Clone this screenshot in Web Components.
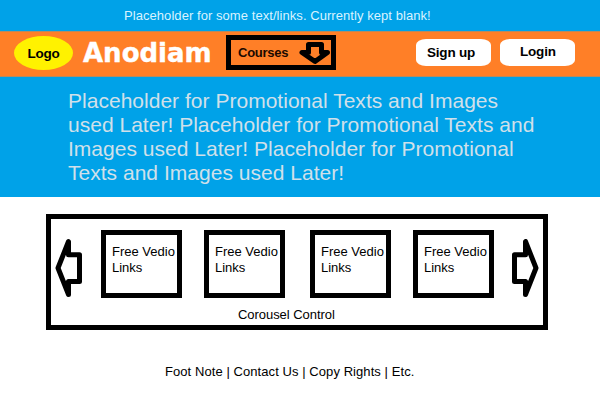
<!DOCTYPE html>
<html lang="en">
<head>
<meta charset="utf-8">
<title>Anodiam</title>
<style>
body { margin: 0; background: #fff; color: #000; font: 13px/15px "Liberation Sans", Arial, sans-serif; }
</style>
</head>
<body>
<anodiam-page></anodiam-page>
<script>
const define = (name, html) => customElements.define(name, class extends HTMLElement {
  constructor() {
    super();
    const t = document.createElement('template');
    t.innerHTML = html;
    this.attachShadow({ mode: 'open' }).append(t.content.cloneNode(true));
  }
});

define('top-strip', `<style>
:host { display: block; box-sizing: border-box; height: 31px; padding: 8px 0 0 124px; background: #00a2e8; color: #d9f3ff; letter-spacing: .06px; white-space: nowrap; }
</style><slot></slot>`);

define('site-logo', `<style>
:host { display: block; box-sizing: border-box; width: 59px; height: 34px; padding-top: 10px; border-radius: 50%; background: #fff200; text-align: center; font-weight: bold; font-size: 13.5px; letter-spacing: -.3px; }
</style><slot></slot>`);

define('site-brand', `<style>
:host { display: block; font: bold 26px/32px "DejaVu Sans", "Liberation Sans", sans-serif; color: #fff; -webkit-text-stroke: .4px #fff; }
</style><slot></slot>`);

define('course-menu', `<style>
:host { display: flex; box-sizing: border-box; width: 110px; height: 35px; border: 5px solid #000; padding-left: 7px; font-weight: bold; color: #1c0a00; }
span { padding-top: 5px; width: 62px; letter-spacing: -.25px; }
svg { display: block; margin-top: 1px; overflow: visible; }
</style><span><slot></slot></span>
<svg width="32" height="24" viewBox="0 0 32 24"><path d="M9.5 3.5H22.5V11.5H28.5L16 20.5L3 11.5H9.5Z" fill="#ff7f27" stroke="#000" stroke-width="5" stroke-linejoin="round"/></svg>`);

define('pill-button', `<style>
:host { display: block; box-sizing: border-box; width: 75px; height: 27px; padding: var(--pad, 6px 0 0 11px); border-radius: 10px / 6px; background: #fff; font-weight: bold; font-size: 13.5px; letter-spacing: -.2px; }
</style><slot></slot>`);

define('site-header', `<style>
:host { display: flex; align-items: flex-start; box-sizing: border-box; height: 46px; background: #ff7f27; border-top: 1px solid #b98a5e; border-bottom: 1px solid #b98a5e; }
site-logo { margin: 4px 0 0 14px; }
site-brand { margin: 5px 0 0 10px; width: 143px; }
course-menu { margin-top: 3px; }
pill-button { margin: 7px 0 0 80px; }
pill-button + pill-button { margin-left: 9px; --pad: 5px 0 0 20px; }
</style>
<site-logo>Logo</site-logo><site-brand>Anodiam</site-brand><course-menu>Courses</course-menu>
<pill-button>Sign up</pill-button><pill-button>Login</pill-button>`);

define('promo-banner', `<style>
:host { display: block; box-sizing: border-box; height: 120px; padding: 12px 0 0 68px; background: #00a2e8; color: #d0e0ea; font-size: 21px; line-height: 24px; letter-spacing: .02px; }
p { margin: 0; width: 490px; }
</style><p><slot></slot></p>`);

define('video-card', `<style>
:host { display: block; box-sizing: border-box; width: 81px; height: 68px; border: 5px solid #000; padding: 9px 0 0 6px; line-height: 16px; white-space: nowrap; }
</style><slot></slot>`);

define('carousel-arrow', `<style>
:host { display: block; width: 28px; height: 60px; }
:host([next]) { transform: scaleX(-1); }
svg { display: block; }
</style><svg width="28" height="60" viewBox="0 0 28 60"><path d="M14.5 3.5V16.7H25.5V43.5H14.5V56.5L4 30Z" fill="#fff" stroke="#000" stroke-width="5" stroke-linejoin="round"/></svg>`);

define('video-carousel', `<style>
:host { display: block; box-sizing: border-box; width: 502px; height: 116px; margin: 17px 0 0 46px; border: 5px solid #000; }
.row { display: flex; padding-top: 11px; height: 68px; }
carousel-arrow { margin: 8px 0 0 3px; }
.cards { display: grid; grid-template-columns: 103px 106px 103px 81px; margin-left: 19px; }
carousel-arrow[next] { margin-left: 18px; }
.caption { padding: 9px 0 0 187px; letter-spacing: -.05px; }
</style>
<div class="row"><carousel-arrow></carousel-arrow>
<div class="cards"><video-card>Free Vedio<br>Links</video-card><video-card>Free Vedio<br>Links</video-card><video-card>Free Vedio<br>Links</video-card><video-card>Free Vedio<br>Links</video-card></div>
<carousel-arrow next></carousel-arrow></div>
<div class="caption">Corousel Control</div>`);

define('site-footer', `<style>
:host { display: block; padding: 34px 0 0 165px; letter-spacing: .07px; white-space: nowrap; }
</style><slot></slot>`);

define('anodiam-page', `<style>:host { display: block; height: 400px; overflow: hidden; }</style>
<top-strip>Placeholder for some text/links. Currently kept blank!</top-strip>
<site-header></site-header>
<promo-banner>Placeholder for Promotional Texts and Images<br>used Later! Placeholder for Promotional Texts and<br>Images used Later! Placeholder for Promotional<br>Texts and Images used Later!</promo-banner>
<video-carousel></video-carousel>
<site-footer>Foot Note | Contact Us | Copy Rights | Etc.</site-footer>`);
</script>
</body>
</html>
